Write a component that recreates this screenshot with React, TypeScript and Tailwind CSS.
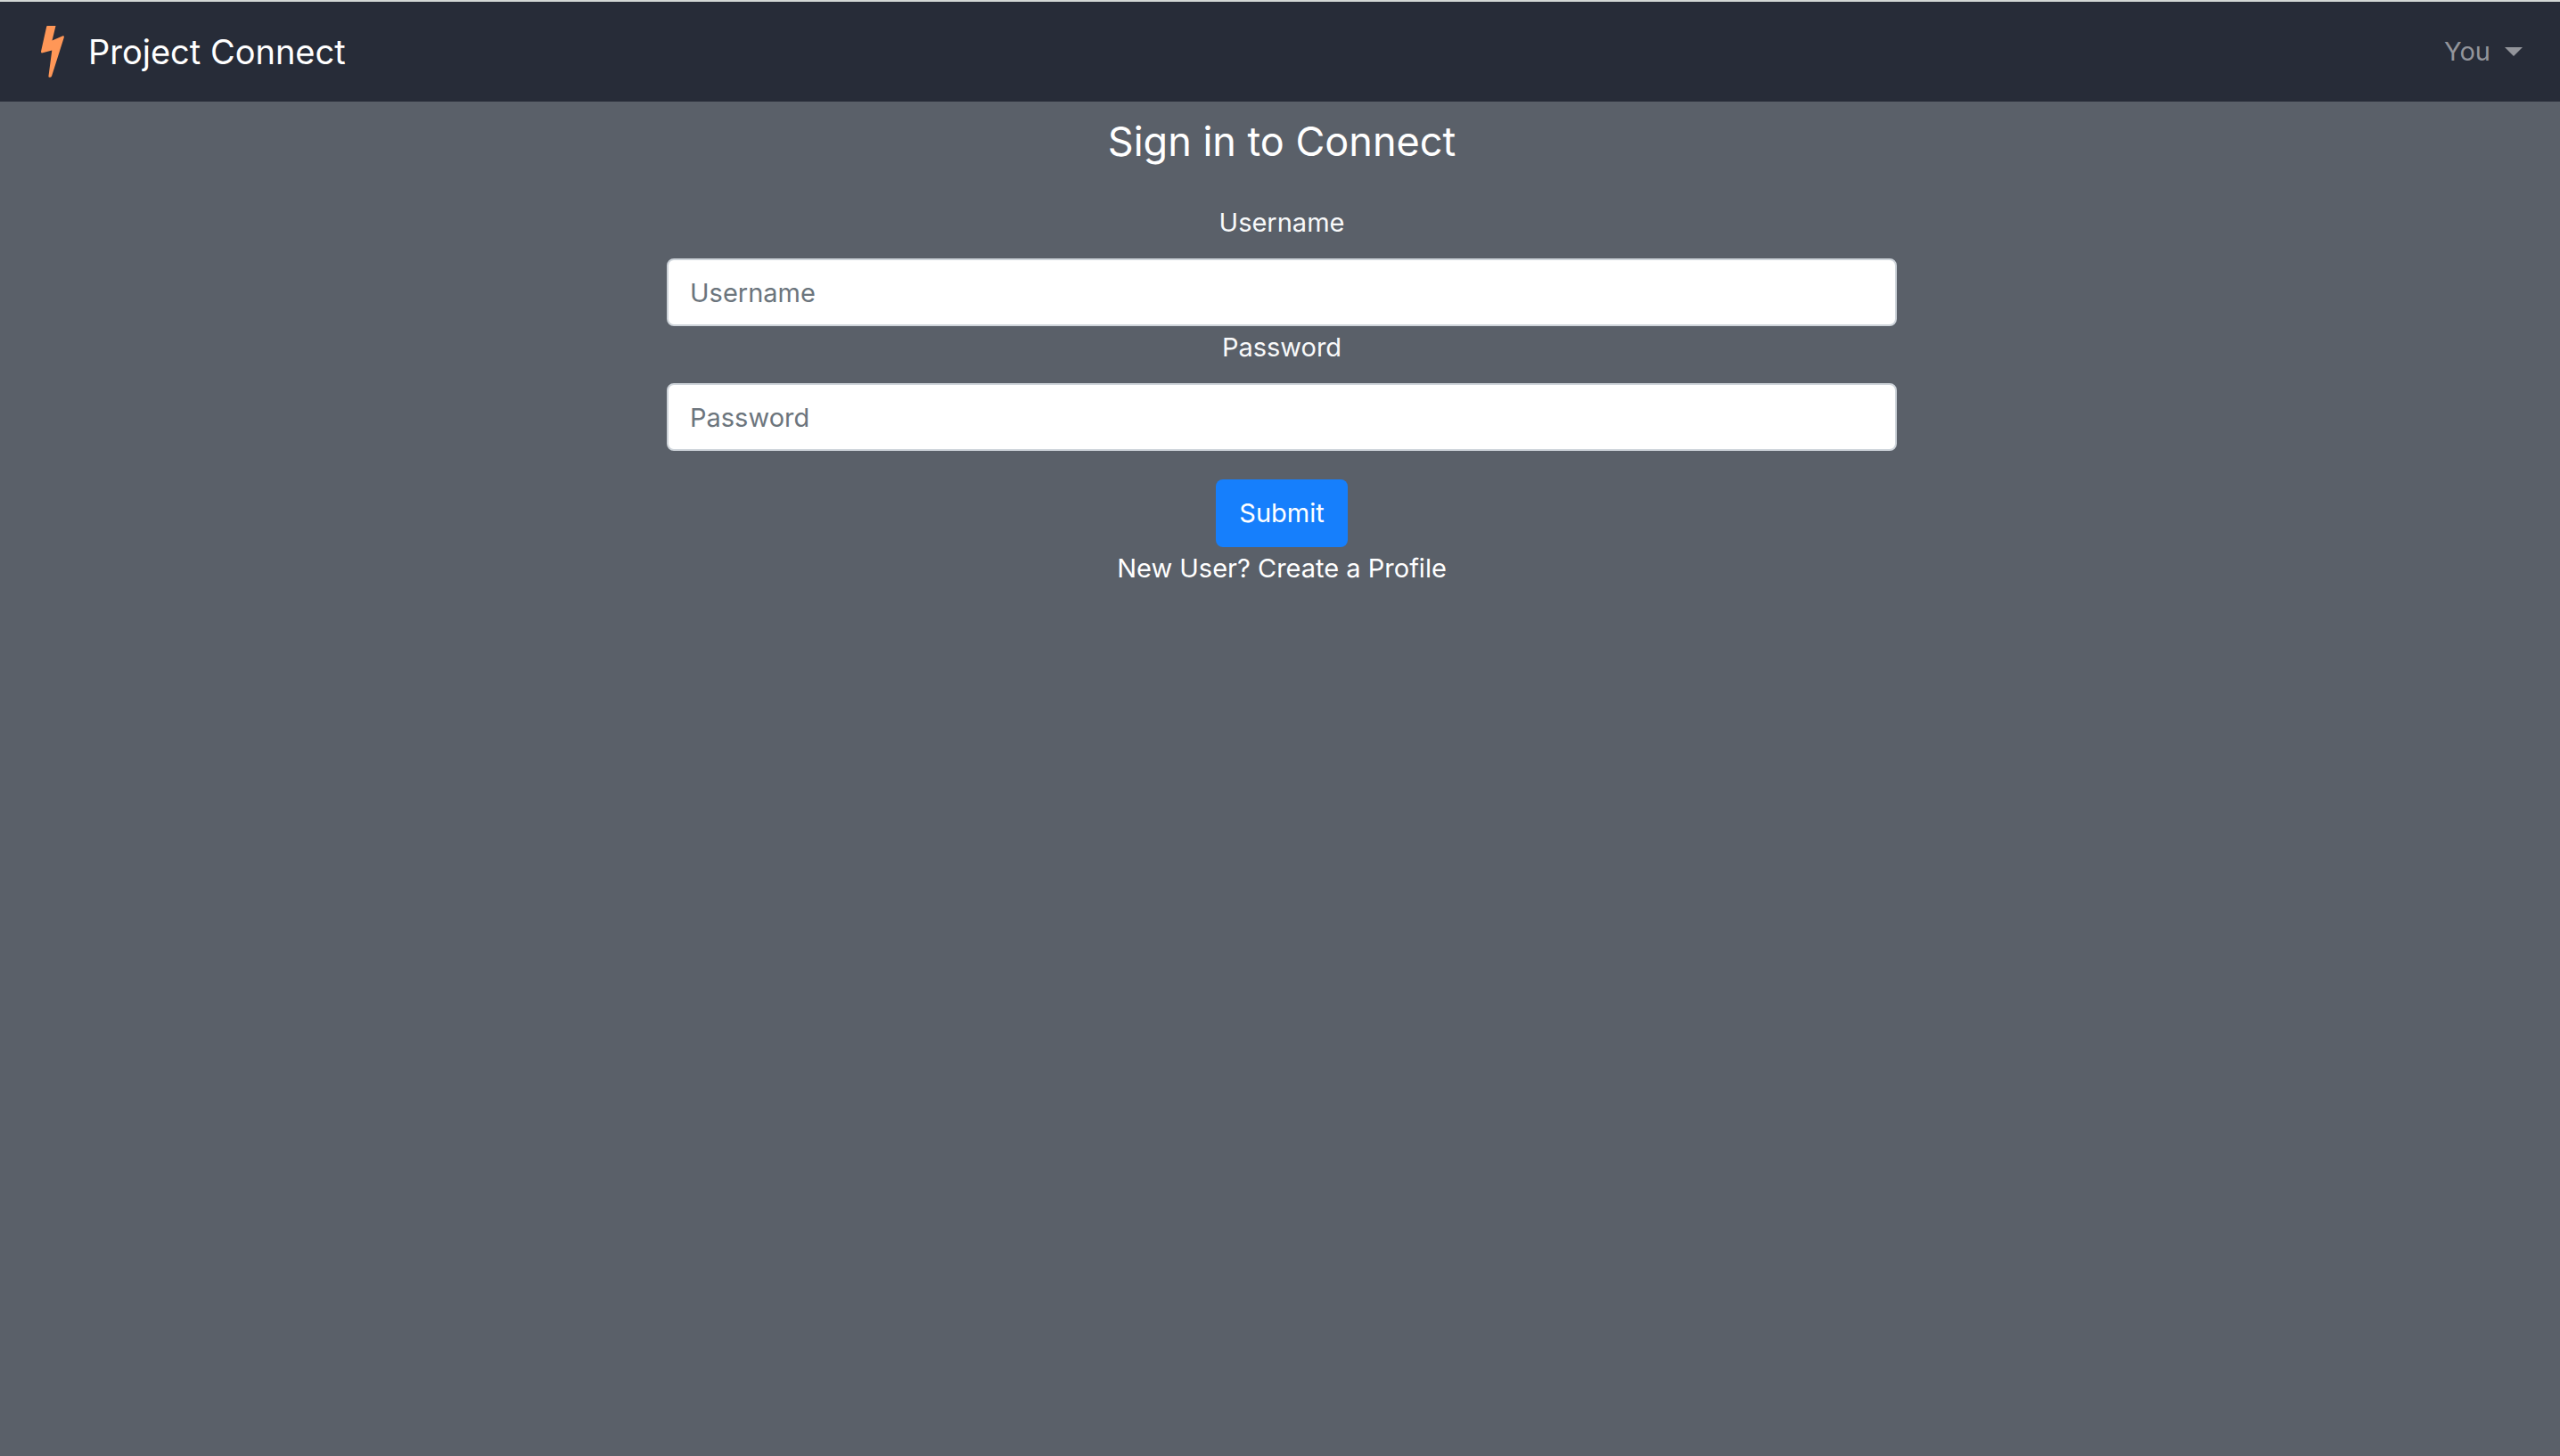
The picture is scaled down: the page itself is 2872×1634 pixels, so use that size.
import React from "react";

function BoltLogo() {
  return (
    <svg viewBox="0 0 28 60" className="h-[60px] w-7" aria-hidden="true">
      <path
        d="M8 1H17.5L13.5 17.5L25.5 12.3Q27.4 11.8 26.8 14L13 57.5Q12 59.5 9.7 58.5Q9.3 58 9.5 57L13.3 28.5L2 31.4Q.8 31.3 1 29.8L7.2 2Q7.4 1 8 1Z"
        fill="#ff9757"
      />
    </svg>
  );
}

function Navbar() {
  return (
    <nav className="flex h-[112px] items-center justify-between bg-[#272c38] pr-[42px] pl-[45px]">
      <a href="#" className="flex items-center gap-[26px] text-[38px] leading-[60px] text-white">
        <BoltLogo />
        Project Connect
      </a>
      <button type="button" aria-haspopup="menu" className="flex items-center gap-4 text-[29px] leading-12 text-[#93959b]">
        You
        <svg viewBox="0 0 20 10" className="h-[10px] w-5" aria-hidden="true">
          <path d="M0 0H20L10 10Z" fill="currentColor" />
        </svg>
      </button>
    </nav>
  );
}

interface FieldProps {
  id: string;
  label: string;
  type: string;
}

function Field({ id, label, type }: FieldProps) {
  return (
    <div className="flex w-full flex-col items-center gap-4">
      <label htmlFor={id} className="text-[#f8f9fa]">
        {label}
      </label>
      <input
        id={id}
        type={type}
        placeholder={label}
        className="h-[76px] w-full rounded-lg border-2 border-[#ced4da] bg-white px-6 text-[#495057] placeholder:text-[#6c757d]"
      />
    </div>
  );
}

export default function App() {
  return (
    <div className="min-h-screen border-t-2 border-[#d3d7d5] bg-[#5a6069] font-['Inter',sans-serif] text-[29px] leading-12 text-white">
      <Navbar />
      <main className="pt-4 pl-1">
        <form
          onSubmit={(e) => e.preventDefault()}
          className="mx-auto flex w-1/2 flex-col items-center px-[27px]"
        >
          <h1 className="mb-[38px] text-[45px] leading-[58px]">Sign in to Connect</h1>
          <Field id="username" label="Username" type="text" />
          <Field id="password" label="Password" type="password" />
          <button type="submit" className="mt-8 h-[76px] rounded-lg bg-[#167ffc] px-[26px]">
            Submit
          </button>
          <a href="#">New User? Create a Profile</a>
        </form>
      </main>
    </div>
  );
}
